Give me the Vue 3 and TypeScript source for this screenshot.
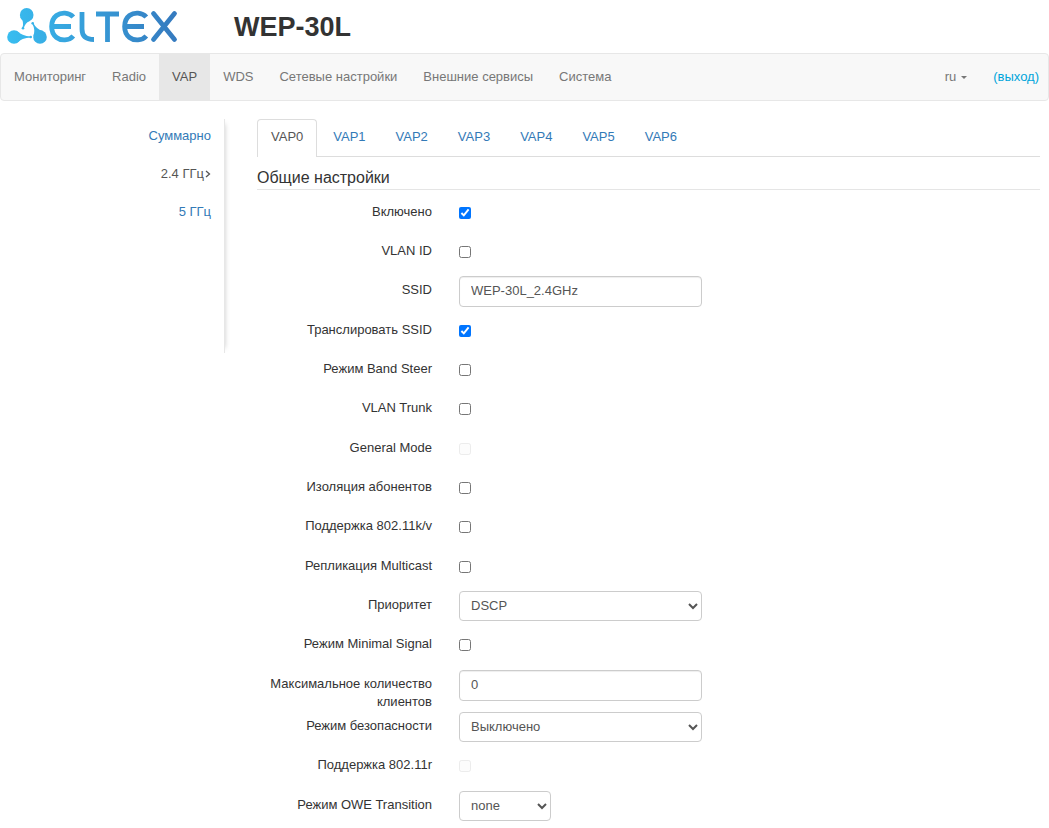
<script setup lang="ts">
import { reactive, ref } from 'vue'

type Kind = 'check' | 'text' | 'select'

interface Field {
  id: string
  label: string
  kind: Kind
  value?: string
  checked?: boolean
  disabled?: boolean
  narrow?: boolean
  options?: string[]
}

const menu = ['Мониторинг', 'Radio', 'VAP', 'WDS', 'Сетевые настройки', 'Внешние сервисы', 'Система']
const bands = ['Суммарно', '2.4 ГГц', '5 ГГц']
const tabs = ['VAP0', 'VAP1', 'VAP2', 'VAP3', 'VAP4', 'VAP5', 'VAP6']
const activeTab = ref('VAP0')

const fields = reactive<Field[]>([
  { id: 'enabled', label: 'Включено', kind: 'check', checked: true },
  { id: 'vlan-id', label: 'VLAN ID', kind: 'check' },
  { id: 'ssid', label: 'SSID', kind: 'text', value: 'WEP-30L_2.4GHz' },
  { id: 'broadcast', label: 'Транслировать SSID', kind: 'check', checked: true },
  { id: 'band-steer', label: 'Режим Band Steer', kind: 'check' },
  { id: 'vlan-trunk', label: 'VLAN Trunk', kind: 'check' },
  { id: 'general-mode', label: 'General Mode', kind: 'check', disabled: true },
  { id: 'isolation', label: 'Изоляция абонентов', kind: 'check' },
  { id: 'kv', label: 'Поддержка 802.11k/v', kind: 'check' },
  { id: 'multicast', label: 'Репликация Multicast', kind: 'check' },
  { id: 'priority', label: 'Приоритет', kind: 'select', value: 'DSCP', options: ['DSCP', '802.1p'] },
  { id: 'min-signal', label: 'Режим Minimal Signal', kind: 'check' },
  { id: 'max-clients', label: 'Максимальное количество клиентов', kind: 'text', value: '0' },
  { id: 'security', label: 'Режим безопасности', kind: 'select', value: 'Выключено', options: ['Выключено', 'WPA', 'WPA2'] },
  { id: 'ft', label: 'Поддержка 802.11r', kind: 'check', disabled: true },
  { id: 'owe', label: 'Режим OWE Transition', kind: 'select', value: 'none', narrow: true, options: ['none'] },
])
</script>

<template>
  <div class="page">
    <header class="header">
      <svg class="logo" viewBox="0 0 172 39" role="img" aria-label="Eltex">
        <defs>
          <linearGradient id="brand" gradientUnits="userSpaceOnUse" x1="0" y1="0" x2="172" y2="0">
            <stop offset="0" stop-color="#38bdf0" />
            <stop offset="1" stop-color="#3579be" />
          </linearGradient>
        </defs>
        <g fill="url(#brand)">
          <circle cx="19.7" cy="7.9" r="6.8" />
          <circle cx="7" cy="30" r="6.8" />
          <circle cx="33" cy="30" r="6.8" />
          <circle cx="16" cy="21.3" r="1.3" />
          <circle cx="23.7" cy="30" r="1.3" />
          <circle cx="25.7" cy="16.3" r="1.3" />
          <path d="M13.3 10Q17.6 15 15.3 21L16.7 21.6Q18 16 23 13.8Z" />
          <path d="M9.5 23.8Q15 29.2 23.7 29.4V30.6Q15 30.8 9.5 36.2Z" />
          <path d="M26.3 29Q28.8 23 25.1 16.6L26.3 16Q29.5 22.5 36 24Z" />
        </g>
        <g fill="none" stroke="url(#brand)" stroke-width="4.8">
          <path d="M66.3 10C62 5 54 5 49.5 8.5C43 13.5 43 25.5 49.5 30.5C54 34 62 34 66.3 29M45 19.5H64" />
          <path d="M75 5V22Q75 32.5 87 32.5M89 7H112M100.500 7V35" />
          <path d="M139.3 10C135 5 127 5 122.5 8.5C116 13.5 116 25.5 122.5 30.5C127 34 135 34 139.3 29M118 19.5H137" />
          <path stroke-linecap="round" d="M146.5 6.5L167.5 32.5M167.5 6.5L146.5 32.5" />
        </g>
      </svg>
      <h1>WEP-30L</h1>
    </header>

    <nav class="navbar">
      <a v-for="item in menu" :key="item" href="#" :class="{ active: item === 'VAP' }">{{ item }}</a>
      <button class="lang" type="button">ru <span class="caret"></span></button>
      <a class="logout" href="#">(выход)</a>
    </nav>

    <div class="body">
      <aside class="sidebar">
        <a v-for="band in bands" :key="band" href="#" :class="{ current: band === '2.4 ГГц' }">
          {{ band }}<svg v-if="band === '2.4 ГГц'" class="chevron" viewBox="0 0 6 8"><path d="M1 1L4.5 4L1 7" /></svg>
        </a>
      </aside>

      <main class="content">
        <div class="tabs" role="tablist">
          <button
            v-for="tab in tabs"
            :key="tab"
            type="button"
            role="tab"
            :aria-selected="tab === activeTab"
            :class="{ active: tab === activeTab }"
            @click="activeTab = tab"
          >{{ tab }}</button>
        </div>

        <h2>Общие настройки</h2>

        <form class="form" @submit.prevent>
          <div v-for="f in fields" :key="f.id" class="row">
            <label :for="f.id">{{ f.label }}</label>
            <input v-if="f.kind === 'check'" :id="f.id" v-model="f.checked" type="checkbox" :disabled="f.disabled" />
            <input v-else-if="f.kind === 'text'" :id="f.id" v-model="f.value" class="control" type="text" />
            <select v-else :id="f.id" v-model="f.value" class="control" :class="{ narrow: f.narrow }">
              <option v-for="o in f.options" :key="o">{{ o }}</option>
            </select>
          </div>
        </form>
      </main>
    </div>
  </div>
</template>

<style>
body {
  margin: 0;
  background: #fff;
}
</style>

<style scoped>
.page {
  font-family: "Liberation Sans", Arial, sans-serif;
  font-size: 13px;
  line-height: 18px;
  color: #333;
}
.page *,
.page {
  box-sizing: border-box;
}
a {
  color: #337ab7;
  text-decoration: none;
}
button {
  font: inherit;
  background: none;
  border: 0;
  cursor: pointer;
}
.header {
  display: flex;
  align-items: center;
  gap: 55px;
  height: 53px;
  padding-left: 7px;
}
.logo {
  width: 172px;
  height: 39px;
}
h1 {
  margin: 0;
  font-size: 27px;
  line-height: 30px;
}
.navbar {
  display: flex;
  height: 48px;
  background: #f8f8f8;
  border: 1px solid #e7e7e7;
  border-radius: 4px;
}
.navbar a,
.lang {
  padding: 14px 13px;
  color: #777;
}
.navbar .active {
  color: #555;
  background: #e7e7e7;
}
.lang {
  display: flex;
  align-items: center;
  gap: 5px;
  margin-left: auto;
}
.caret {
  border: 3px solid transparent;
  border-top-color: #777;
  border-bottom: 0;
}
.navbar .logout {
  padding-right: 9px;
  color: #00a5db;
}
.body {
  display: grid;
  grid-template-columns: 225px 1fr;
  column-gap: 32px;
  align-items: start;
  padding: 18px 9px 0 0;
}
.sidebar {
  display: flex;
  flex-direction: column;
  align-items: flex-end;
  gap: 20px;
  height: 234px;
  padding: 8px 13px 0 0;
  border-right: 1px solid #e7e7e7;
  box-shadow: 5px 0 5px -5px #ccc;
}
.sidebar .current {
  color: #555;
}
.chevron {
  width: 6px;
  height: 8px;
  margin-left: 1px;
  fill: none;
  stroke: #555;
  stroke-width: 1.3;
}
.tabs {
  display: flex;
  gap: 2px;
  height: 38px;
  border-bottom: 1px solid #ddd;
}
.tabs button {
  height: 38px;
  padding: 0 13px 4px;
  color: #337ab7;
  border: 1px solid transparent;
  border-bottom: 0;
  border-radius: 4px 4px 0 0;
}
.tabs .active {
  color: #555;
  background: #fff;
  border-color: #ddd;
}
h2 {
  margin: 11px 0 8px;
  padding-bottom: 1px;
  font-size: 16px;
  font-weight: 400;
  line-height: 20px;
  border-bottom: 1px solid #e5e5e5;
}
.row {
  display: grid;
  grid-template-columns: 175px 1fr;
  column-gap: 27px;
  align-items: start;
  min-height: 39px;
}
.row:nth-child(3n) {
  margin-bottom: 1px;
}
label {
  padding: 5px 0 1px;
  text-align: right;
}
input[type="checkbox"] {
  width: 12px;
  height: 12px;
  margin: 9px 0 0;
}
input[type="checkbox"]:disabled {
  opacity: 0.4;
}
.control {
  width: 243px;
  height: 31px;
  padding: 4px 11px 6px;
  font: inherit;
  color: #555;
  background: #fff;
  border: 1px solid #ccc;
  border-radius: 4px;
}
input.control {
  box-shadow: inset 0 1px 1px #eee;
}
select.control {
  height: 30px;
  padding: 4px 0 6px 7px;
}
.control.narrow {
  width: 92px;
}
</style>
